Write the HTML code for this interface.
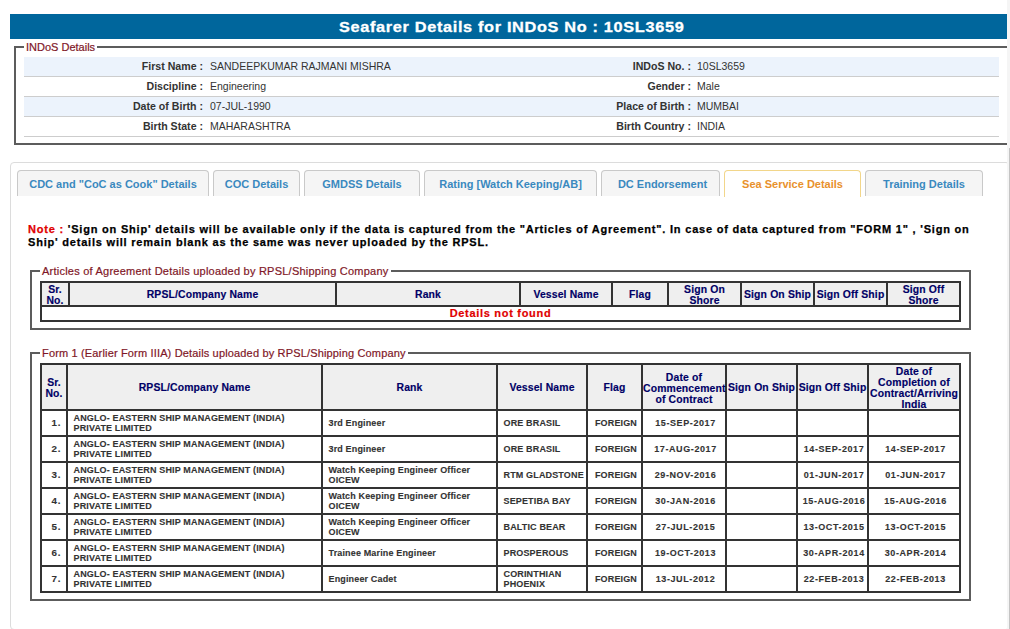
<!DOCTYPE html>
<html><head><meta charset="utf-8">
<style>
*{box-sizing:border-box;margin:0;padding:0}
html,body{width:1010px;height:629px;overflow:hidden;background:#fff;font-family:"Liberation Sans",sans-serif;position:relative}
.abs{position:absolute}
#bar{left:10px;top:14px;width:997px;height:25px;background:#00669c}
#title{left:339px;top:14px;height:25px;line-height:25px;font-size:15px;font-weight:bold;color:#fff;white-space:nowrap;transform-origin:0 0;letter-spacing:0.6px;transform:scaleX(1.088);-webkit-text-stroke:0.3px #fff}
#rstrip{left:1007px;top:0;width:3px;height:629px;background:#f5f5f5}
#rline{left:1009px;top:148px;width:1px;height:481px;background:#c4c4c4}
.fs{border:2px solid #5c5c5c}
.lg{background:#fff;padding:0 2px;font-size:11px;color:#7f1727;-webkit-text-stroke:0.2px #7f1727;white-space:nowrap;line-height:13px}
#fs1{left:14px;top:46px;width:1000px;height:99px}
#rows{left:24px;top:57px;width:975px}
.r{height:20px;border-bottom:1px solid #cdcdcd;position:relative;font-size:10.5px;color:#333;line-height:19px;white-space:nowrap}
.r.o{background:#ecf3fc}
.r span{position:absolute;top:0}
.r .l{font-weight:bold;text-align:right;font-size:10.6px}
#panel{left:10px;top:162px;width:1000px;height:468px;border:1px solid #dcdcdc;border-radius:4px}
.tab{top:170px;height:26px;background:#f5f5f5;border:1px solid #c9c9c9;border-bottom:none;border-radius:4px 4px 0 0;font-size:11px;font-weight:bold;color:#3a89bf;text-align:center;line-height:26px;white-space:nowrap}
.tab.act{background:#fff;border-color:#f2d68a;color:#e8912c;height:27px}
#note{left:28px;top:223px;font-size:11px;font-weight:bold;color:#000;line-height:12.6px;white-space:nowrap;letter-spacing:0.795px}
#note .red{color:#e00000;-webkit-text-stroke:0.25px #e00000}
#note{-webkit-text-stroke:0.25px #000}
table{border-collapse:separate;border-spacing:0;border:1px solid #333;table-layout:fixed;position:absolute}
td,th{border:1px solid #333;padding:0}
th{background:#efefef;color:#000066;-webkit-text-stroke:0.15px #000066;letter-spacing:0.15px;font-size:10.4px;font-weight:bold;line-height:11px;text-align:center;vertical-align:middle}
td{color:#333;font-size:9px;font-weight:bold;line-height:10px;vertical-align:middle;letter-spacing:0.15px;-webkit-text-stroke:0.12px #333}
#t2 td{height:26px}
#t2 td.c{text-align:center;padding-left:3px}
#t2 td.n{font-size:9.8px;padding-left:5px;letter-spacing:0.8px}
#t2 td.p{padding-left:5.5px;text-align:left}
#t1 th{line-height:11px}
.d{letter-spacing:0.6px}
.ml{position:relative;top:1px}
#nf{color:#e00000;font-size:11px;font-weight:bold;text-align:center;line-height:13px;letter-spacing:0.7px;-webkit-text-stroke:0.2px #e00000}
</style></head><body>
<div id="bar" class="abs"></div>
<div id="title" class="abs">Seafarer Details for INDoS No : 10SL3659</div>

<div id="fs1" class="abs fs"></div>
<div class="abs lg" style="left:24px;top:41px">INDoS Details</div>
<div id="rows" class="abs">
  <div class="r o"><span class="l" style="left:0;width:179px">First Name :</span><span style="left:186px">SANDEEPKUMAR RAJMANI MISHRA</span><span class="l" style="left:488px;width:179px">INDoS No. :</span><span style="left:673px">10SL3659</span></div>
  <div class="r"><span class="l" style="left:0;width:179px">Discipline :</span><span style="left:186px">Engineering</span><span class="l" style="left:488px;width:179px">Gender :</span><span style="left:673px">Male</span></div>
  <div class="r o"><span class="l" style="left:0;width:179px">Date of Birth :</span><span style="left:186px">07-JUL-1990</span><span class="l" style="left:488px;width:179px">Place of Birth :</span><span style="left:673px">MUMBAI</span></div>
  <div class="r"><span class="l" style="left:0;width:179px">Birth State :</span><span style="left:186px">MAHARASHTRA</span><span class="l" style="left:488px;width:179px">Birth Country :</span><span style="left:673px">INDIA</span></div>
</div>

<div id="panel" class="abs"></div>
<div class="abs tab" style="left:17px;width:192px">CDC and "CoC as Cook" Details</div>
<div class="abs tab" style="left:213px;width:87px">COC Details</div>
<div class="abs tab" style="left:304px;width:116px">GMDSS Details</div>
<div class="abs tab" style="left:424px;width:173px">Rating [Watch Keeping/AB]</div>
<div class="abs tab" style="left:601px;width:119px;padding-left:4px">DC Endorsement</div>
<div class="abs tab act" style="left:724px;width:137px">Sea Service Details</div>
<div class="abs tab" style="left:865px;width:118px">Training Details</div>

<div id="note" class="abs"><span class="red">Note : </span>'Sign on Ship' details will be available only if the data is captured from the "Articles of Agreement". In case of data captured from "FORM 1" , 'Sign on<br>Ship' details will remain blank as the same was never uploaded by the RPSL.</div>

<div class="abs fs" style="left:30px;top:270px;width:941px;height:60px"></div>
<div class="abs lg" style="left:40px;top:265px;letter-spacing:0.23px">Articles of Agreement Details uploaded by RPSL/Shipping Company</div>
<table id="t1" style="left:40px;top:281px;width:921px">
<colgroup><col style="width:28px"><col style="width:267px"><col style="width:184px"><col style="width:92px"><col style="width:56px"><col style="width:73px"><col style="width:73px"><col style="width:73px"><col style="width:73px"></colgroup>
<tr style="height:24px"><th><span class="ml">Sr.<br>No.</span></th><th>RPSL/Company Name</th><th>Rank</th><th>Vessel Name</th><th>Flag</th><th><span class="ml">Sign On<br>Shore</span></th><th>Sign On Ship</th><th>Sign Off Ship</th><th><span class="ml">Sign Off<br>Shore</span></th></tr>
<tr style="height:15px"><td colspan="9" id="nf">Details not found</td></tr>
</table>

<div class="abs fs" style="left:30px;top:352px;width:941px;height:249px"></div>
<div class="abs lg" style="left:40px;top:347px;letter-spacing:0.16px">Form 1 (Earlier Form IIIA) Details uploaded by RPSL/Shipping Company</div>
<table id="t2" style="left:40px;top:363px;width:921px">
<colgroup><col style="width:26px"><col style="width:255px"><col style="width:175px"><col style="width:90px"><col style="width:55px"><col style="width:84px"><col style="width:71px"><col style="width:71px"><col style="width:92px"></colgroup>
<tr style="height:46px"><th><span class="ml">Sr.<br>No.</span></th><th>RPSL/Company Name</th><th>Rank</th><th>Vessel Name</th><th>Flag</th><th><span class="ml">Date of<br>Commencement<br>of Contract</span></th><th>Sign On Ship</th><th>Sign Off Ship</th><th><span class="ml">Date of<br>Completion of<br>Contract/Arriving<br>India</span></th></tr>
<tr><td class="c n">1.</td><td class="p">ANGLO- EASTERN SHIP MANAGEMENT (INDIA)<br>PRIVATE LIMITED</td><td class="p">3rd Engineer</td><td class="p">ORE BRASIL</td><td class="c">FOREIGN</td><td class="c d">15-SEP-2017</td><td></td><td></td><td></td></tr>
<tr><td class="c n">2.</td><td class="p">ANGLO- EASTERN SHIP MANAGEMENT (INDIA)<br>PRIVATE LIMITED</td><td class="p">3rd Engineer</td><td class="p">ORE BRASIL</td><td class="c">FOREIGN</td><td class="c d">17-AUG-2017</td><td></td><td class="c d">14-SEP-2017</td><td class="c d">14-SEP-2017</td></tr>
<tr><td class="c n">3.</td><td class="p">ANGLO- EASTERN SHIP MANAGEMENT (INDIA)<br>PRIVATE LIMITED</td><td class="p">Watch Keeping Engineer Officer<br>OICEW</td><td class="p">RTM GLADSTONE</td><td class="c">FOREIGN</td><td class="c d">29-NOV-2016</td><td></td><td class="c d">01-JUN-2017</td><td class="c d">01-JUN-2017</td></tr>
<tr><td class="c n">4.</td><td class="p">ANGLO- EASTERN SHIP MANAGEMENT (INDIA)<br>PRIVATE LIMITED</td><td class="p">Watch Keeping Engineer Officer<br>OICEW</td><td class="p">SEPETIBA BAY</td><td class="c">FOREIGN</td><td class="c d">30-JAN-2016</td><td></td><td class="c d">15-AUG-2016</td><td class="c d">15-AUG-2016</td></tr>
<tr><td class="c n">5.</td><td class="p">ANGLO- EASTERN SHIP MANAGEMENT (INDIA)<br>PRIVATE LIMITED</td><td class="p">Watch Keeping Engineer Officer<br>OICEW</td><td class="p">BALTIC BEAR</td><td class="c">FOREIGN</td><td class="c d">27-JUL-2015</td><td></td><td class="c d">13-OCT-2015</td><td class="c d">13-OCT-2015</td></tr>
<tr><td class="c n">6.</td><td class="p">ANGLO- EASTERN SHIP MANAGEMENT (INDIA)<br>PRIVATE LIMITED</td><td class="p">Trainee Marine Engineer</td><td class="p">PROSPEROUS</td><td class="c">FOREIGN</td><td class="c d">19-OCT-2013</td><td></td><td class="c d">30-APR-2014</td><td class="c d">30-APR-2014</td></tr>
<tr><td class="c n">7.</td><td class="p">ANGLO- EASTERN SHIP MANAGEMENT (INDIA)<br>PRIVATE LIMITED</td><td class="p">Engineer Cadet</td><td class="p">CORINTHIAN<br>PHOENIX</td><td class="c">FOREIGN</td><td class="c d">13-JUL-2012</td><td></td><td class="c d">22-FEB-2013</td><td class="c d">22-FEB-2013</td></tr>
</table>

<div id="rstrip" class="abs"></div>
<div id="rline" class="abs"></div>
</body></html>
